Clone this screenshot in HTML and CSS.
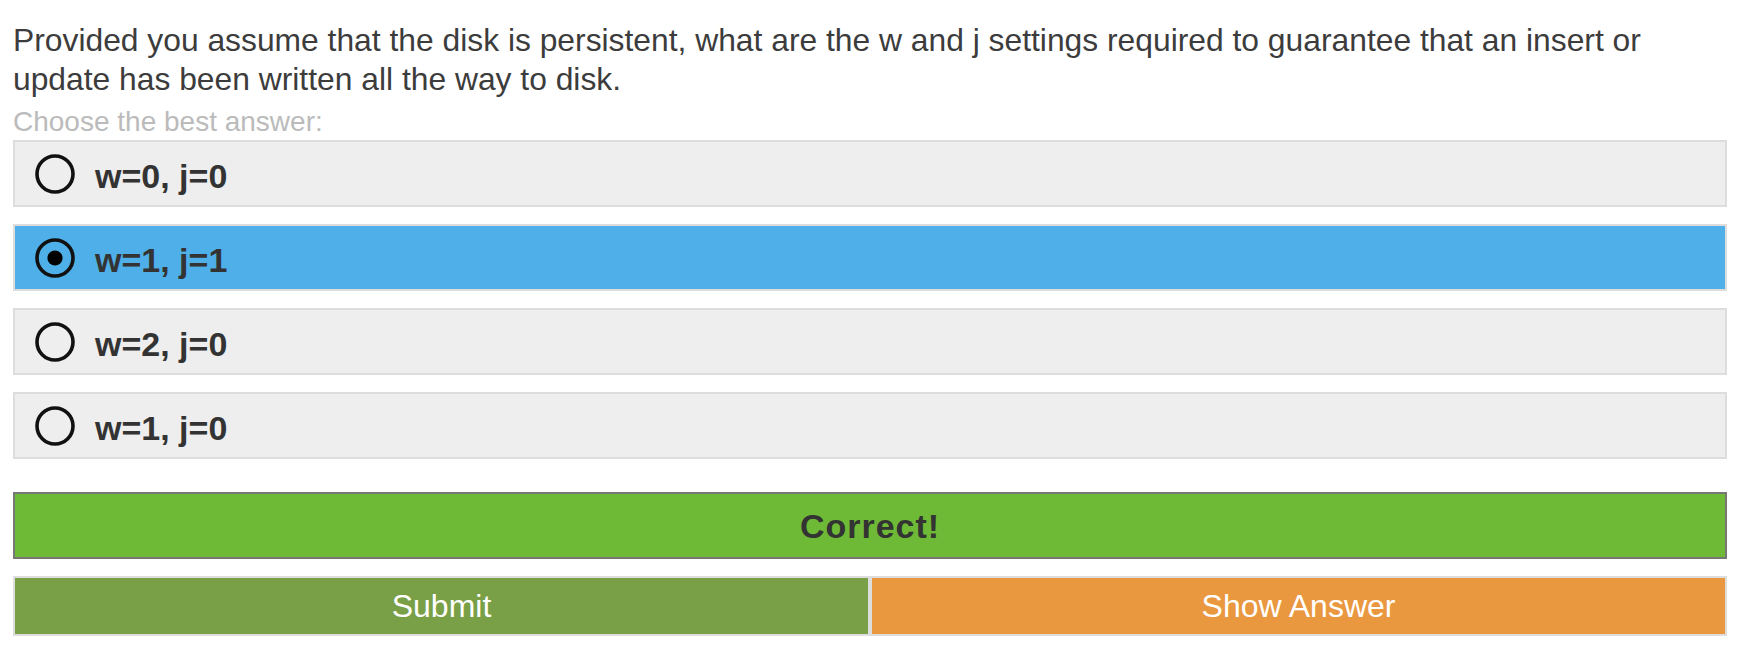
FILE: index.html
```html
<!DOCTYPE html>
<html lang="en">
<head>
<meta charset="utf-8">
<title>Quiz question</title>
<link rel="stylesheet" href="styles.css">
</head>
<body>
<div class="quiz">
  <p class="question">Provided you assume that the disk is persistent, what are the w and j settings required to guarantee that an insert or update has been written all the way to disk.</p>
  <p class="hint">Choose the best answer:</p>
  <div class="options">
    <div class="option">
      <svg class="radio" viewBox="0 0 40 40" width="40" height="40"><circle cx="20" cy="20" r="18" fill="none" stroke="#111" stroke-width="3.6"/></svg>
      <span class="label">w=0, j=0</span>
    </div>
    <div class="option selected">
      <svg class="radio" viewBox="0 0 40 40" width="40" height="40"><circle cx="20" cy="20" r="18" fill="none" stroke="#111" stroke-width="3.6"/><circle cx="20" cy="20" r="7.6" fill="#000"/></svg>
      <span class="label">w=1, j=1</span>
    </div>
    <div class="option">
      <svg class="radio" viewBox="0 0 40 40" width="40" height="40"><circle cx="20" cy="20" r="18" fill="none" stroke="#111" stroke-width="3.6"/></svg>
      <span class="label">w=2, j=0</span>
    </div>
    <div class="option">
      <svg class="radio" viewBox="0 0 40 40" width="40" height="40"><circle cx="20" cy="20" r="18" fill="none" stroke="#111" stroke-width="3.6"/></svg>
      <span class="label">w=1, j=0</span>
    </div>
  </div>
  <div class="result">Correct!</div>
  <div class="actions">
    <div class="btn submit">Submit</div>
    <div class="btn show">Show Answer</div>
  </div>
</div>
</body>
</html>
```
FILE: styles.css
```css
html, body {
  margin: 0;
  padding: 0;
  background: #fff;
}
body {
  font-family: "Liberation Sans", Arial, sans-serif;
  color: #333;
}
.quiz {
  width: 1714px;
  padding: 21px 0 0 13px;
  display: flex;
  flex-direction: column;
}
.question {
  margin: 0;
  font-size: 31.8px;
  line-height: 39px;
  color: #3c3c3c;
  max-width: 1660px;
}
.hint {
  margin: 5px 0 1px;
  font-size: 28px;
  line-height: 35px;
  color: #bbb;
}
.options {
  display: flex;
  flex-direction: column;
  gap: 17px;
}
.option {
  box-sizing: border-box;
  height: 67px;
  border: 2px solid #ddd;
  background: #eee;
  display: flex;
  align-items: center;
  padding-left: 20px;
  gap: 20px;
}
.option.selected {
  background: #4fafe8;
}
.radio {
  flex: none;
  display: block;
}
.label {
  font-weight: bold;
  font-size: 34px;
  line-height: 40px;
  padding-top: 4px;
  color: #333;
}
.result {
  box-sizing: border-box;
  margin-top: 33px;
  height: 67px;
  border: 2px solid #777;
  background: #6eba36;
  display: flex;
  align-items: center;
  justify-content: center;
  font-weight: bold;
  font-size: 34px;
  letter-spacing: 1px;
  padding-top: 2px;
  color: #333;
}
.actions {
  box-sizing: border-box;
  margin-top: 17px;
  height: 60px;
  border: 2px solid #ddd;
  background: #ddd;
  display: grid;
  grid-template-columns: 1fr 1fr;
  gap: 4px;
}
.btn {
  display: flex;
  align-items: center;
  justify-content: center;
  color: #fff;
  font-size: 32px;
}
.submit {
  background: #7aa047;
}
.show {
  background: #e9983f;
}
```
